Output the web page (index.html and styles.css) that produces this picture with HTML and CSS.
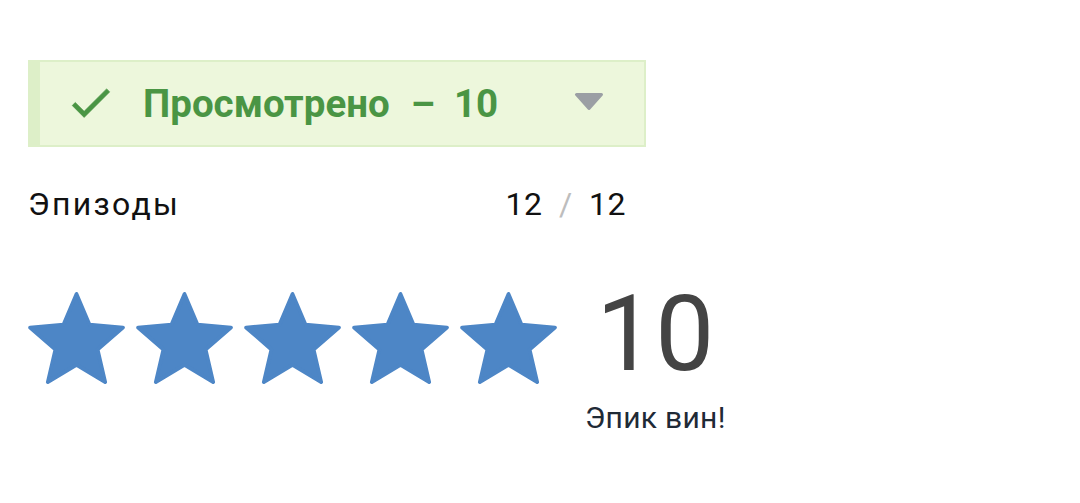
FILE: index.html
```html
<!DOCTYPE html>
<html lang="ru">
<head>
<meta charset="utf-8">
<link rel="stylesheet" href="styles.css">
</head>
<body>
<main class="page">
  <div class="status">
    <svg class="check" viewBox="0 0 24 24" width="51" height="51"><path d="M9 16.17L4.83 12l-1.42 1.41L9 19 21 7l-1.41-1.41z" fill="#4a9544" stroke="#4a9544" stroke-width="0.35"/></svg>
    <span class="status-text">Просмотрено</span>
    <span class="status-dash">–</span>
    <span class="status-num">10</span>
    <svg class="caret" viewBox="0 0 30 17" width="30" height="17"><path d="M2.5 1.5 H27.5 L15 15.5 Z" fill="#9b9fa4" stroke="#9b9fa4" stroke-width="3" stroke-linejoin="round"/></svg>
  </div>
  <div class="episodes">
    <span class="ep-label">Эпизоды</span>
    <span class="ep-count">12 <span class="slash">/</span> 12</span>
  </div>
  <div class="rating">
    <div class="stars">
      <svg class="star" viewBox="1.6 1.6 20.8 19.8" width="97" height="92"><path d="M12 17.27L18.18 21l-1.64-7.03L22 9.24l-7.19-.61L12 2 9.19 8.63 2 9.24l5.46 4.73L5.82 21z"/></svg>
      <svg class="star" viewBox="1.6 1.6 20.8 19.8" width="97" height="92"><path d="M12 17.27L18.18 21l-1.64-7.03L22 9.24l-7.19-.61L12 2 9.19 8.63 2 9.24l5.46 4.73L5.82 21z"/></svg>
      <svg class="star" viewBox="1.6 1.6 20.8 19.8" width="97" height="92"><path d="M12 17.27L18.18 21l-1.64-7.03L22 9.24l-7.19-.61L12 2 9.19 8.63 2 9.24l5.46 4.73L5.82 21z"/></svg>
      <svg class="star" viewBox="1.6 1.6 20.8 19.8" width="97" height="92"><path d="M12 17.27L18.18 21l-1.64-7.03L22 9.24l-7.19-.61L12 2 9.19 8.63 2 9.24l5.46 4.73L5.82 21z"/></svg>
      <svg class="star" viewBox="1.6 1.6 20.8 19.8" width="97" height="92"><path d="M12 17.27L18.18 21l-1.64-7.03L22 9.24l-7.19-.61L12 2 9.19 8.63 2 9.24l5.46 4.73L5.82 21z"/></svg>
    </div>
    <div class="score">
      <div class="score-num">10</div>
      <div class="score-label">Эпик вин!</div>
    </div>
  </div>
</main>
</body>
</html>
```
FILE: styles.css
```css
html, body {
  margin: 0;
  padding: 0;
  background: #ffffff;
}
body {
  font-family: Roboto, "Noto Sans", sans-serif;
}
.page {
  padding: 60px 0 0 28px;
}
.status {
  box-sizing: border-box;
  width: 618px;
  height: 87px;
  display: flex;
  align-items: center;
  background: #edf7dc;
  border: 2px solid #ddefc8;
  border-left: 12px solid #ddefc8;
  padding-left: 25px;
  padding-right: 40px;
  color: #4a9544;
  font-weight: 700;
  font-size: 38.5px;
}
.check {
  display: block;
  margin-top: -3px;
}
.status-text {
  margin-left: 27px;
}
.status-dash {
  margin: 0 19px 0 21px;
}
.caret {
  display: block;
  margin-left: auto;
  margin-top: -4px;
}
.episodes {
  box-sizing: border-box;
  width: 618px;
  display: flex;
  justify-content: space-between;
  align-items: baseline;
  padding-right: 20px;
  margin-top: 38px;
  font-size: 32px;
  color: #111111;
  line-height: 38px;
}
.ep-label {
  letter-spacing: 2.3px;
}
.ep-count {
  letter-spacing: 0.5px;
}
.slash {
  color: #bdbdbd;
  margin: 0 8px;
}
.rating {
  display: flex;
  align-items: flex-start;
  margin-top: 69px;
}
.stars {
  display: flex;
  gap: 11px;
}
.star {
  display: block;
}
.star path {
  fill: #4d86c6;
  stroke: #4d86c6;
  stroke-width: 0.8;
  stroke-linejoin: round;
}
.score {
  display: flex;
  flex-direction: column;
  align-items: center;
  margin-left: 28px;
  margin-top: -16px;
}
.score-num {
  font-size: 105px;
  line-height: 118px;
  color: #444444;
  font-weight: 400;
}
.score-label {
  font-size: 30px;
  line-height: 34px;
  color: #1f2a36;
  margin-top: 7px;
  letter-spacing: 0.3px;
}
```
